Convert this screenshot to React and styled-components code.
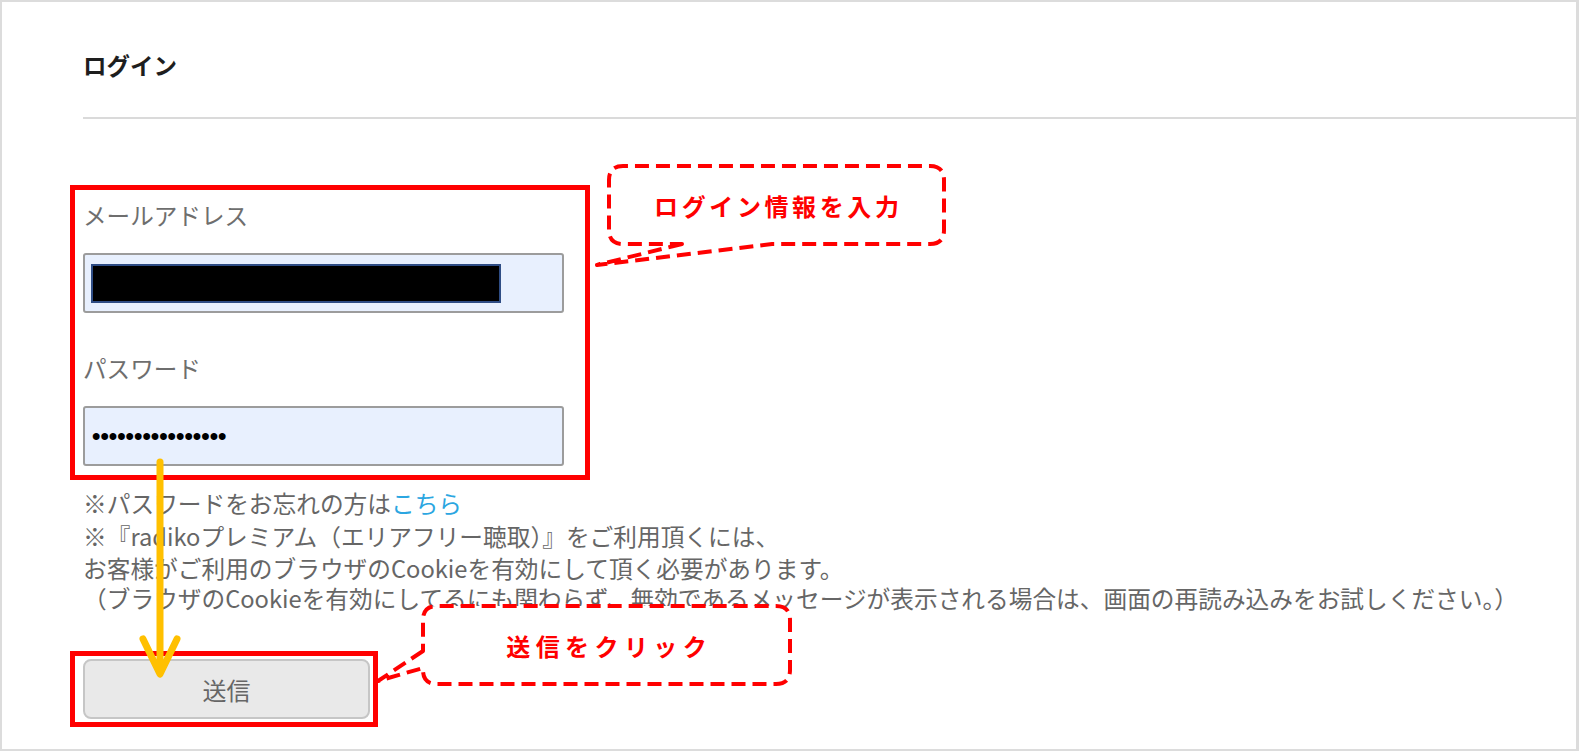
import styled, { createGlobalStyle } from 'styled-components'

const GlobalStyle = createGlobalStyle`
	html, body {
		margin: 0;
		padding: 0;
		background: #ffffff;
	}
	body {
		font-family: 'Noto Sans CJK JP', 'Noto Sans', sans-serif;
	}
`

const notes = [
	{ text: '※パスワードをお忘れの方は', link: 'こちら', gap: 0 },
	{ text: '※『radikoプレミアム（エリアフリー聴取）』をご利用頂くには、', gap: 1 },
	{ text: 'お客様がご利用のブラウザのCookieを有効にして頂く必要があります。', gap: 0 },
	{
		text: '（ブラウザのCookieを有効にしてるにも関わらず、無効であるメッセージが表示される場合は、画面の再読み込みをお試しください。）',
		gap: -2,
	},
]

const App = () => {
	return (
		<>
			<GlobalStyle />
			<Frame>
				<Header>
					<Title>ログイン</Title>
				</Header>
				<Body>
					<Highlight $width={520}>
						<FormArea>
							<Label>メールアドレス</Label>
							<Field>
								<Redacted />
							</Field>
							<Label $top={40}>パスワード</Label>
							<Field>
								<Dots>••••••••••••••••</Dots>
							</Field>
						</FormArea>
					</Highlight>

					<Notes>
						{notes.map((n, i) => (
							<NoteLine key={i} $gap={n.gap}>
								{n.text}
								{n.link && <Link href='#'>{n.link}</Link>}
							</NoteLine>
						))}
					</Notes>

					<Highlight $width={308} $button>
						<SubmitButton type='button'>送信</SubmitButton>
					</Highlight>
				</Body>

				<Annotations width='1579' height='751' viewBox='0 0 1579 751'>
					<g
						fill='#ffffff'
						stroke='#ff0000'
						strokeWidth='4'
						strokeDasharray='14 7'
						strokeLinejoin='round'
					>
						<path d='M 682 244 L 597 265 L 772 244 L 930 244 Q 944 244 944 230 L 944 180 Q 944 166 930 166 L 623 166 Q 609 166 609 180 L 609 230 Q 609 244 623 244 Z' />
						<path d='M 423 651 L 378 681 L 423 668 L 423 670 Q 423 684 437 684 L 776 684 Q 790 684 790 670 L 790 620 Q 790 606 776 606 L 437 606 Q 423 606 423 620 Z' />
					</g>
					<g
						fill='none'
						stroke='#ffc000'
						strokeWidth='7'
						strokeLinecap='round'
						strokeLinejoin='round'
					>
						<path d='M 160 462 L 160 672' />
						<path d='M 143 639 L 160 674 L 177 639' />
					</g>
				</Annotations>

				<Callout $left={609} $top={166} $width={335} $height={78} $spacing={3.6}>
					ログイン情報を入力
				</Callout>
				<Callout $left={423} $top={606} $width={367} $height={78} $spacing={5.4}>
					送信をクリック
				</Callout>
			</Frame>
		</>
	)
}

export default App

const Frame = styled.div`
	position: relative;
	box-sizing: border-box;
	width: 1579px;
	height: 751px;
	border: 2px solid #dcdcdc;
	border-right-width: 3px;
	overflow: hidden;
	background: #ffffff;
`

const Header = styled.div`
	margin-left: 81px;
	padding-top: 48px;
	padding-bottom: 37px;
	border-bottom: 2px solid #dadada;
`

const Title = styled.h1`
	margin: 0;
	font-size: 23.5px;
	line-height: 30px;
	font-weight: 700;
	color: #1e1e1e;
`

const Body = styled.div`
	margin-left: 81px;
	display: flex;
	flex-direction: column;
	align-items: flex-start;
`

const Highlight = styled.div`
	box-sizing: border-box;
	width: ${(p) => p.$width}px;
	margin-left: -13px;
	margin-top: ${(p) => (p.$button ? 37 : 66)}px;
	border: 5px solid #ff0000;
	padding: ${(p) => (p.$button ? '3px 3px 3px 8px' : '10px 20px 9px 8px')};
`

const FormArea = styled.div`
	display: flex;
	flex-direction: column;
`

const Label = styled.div`
	margin-top: ${(p) => p.$top || 0}px;
	font-size: 23.6px;
	line-height: 30px;
	color: #6e6e6e;
`

const Field = styled.div`
	box-sizing: border-box;
	width: 481px;
	height: 60px;
	margin-top: 23px;
	padding: 0 6px;
	display: flex;
	align-items: center;
	background: #e8f0fe;
	border: 2px solid #9c9c9c;
	border-radius: 3px;
`

const Redacted = styled.div`
	box-sizing: border-box;
	width: 410px;
	height: 39px;
	background: #000000;
	border: 2px solid #2f4d85;
`

const Dots = styled.span`
	font-family: 'Liberation Sans', Arial, sans-serif;
	font-size: 24px;
	font-weight: 700;
	color: #000000;
	line-height: 1;
	margin-left: 1px;
`

const Notes = styled.div`
	margin-top: 7px;
	display: flex;
	flex-direction: column;
`

const NoteLine = styled.div`
	margin-top: ${(p) => p.$gap}px;
	font-size: 23.7px;
	line-height: 32px;
	color: #666666;
	white-space: nowrap;
`

const Link = styled.a`
	color: #2ba6e1;
	text-decoration: none;
`

const SubmitButton = styled.button`
	box-sizing: border-box;
	width: 287px;
	height: 60px;
	display: block;
	background: #e9e9e9;
	border: 2px solid #c6c6c6;
	border-radius: 8px;
	font-family: 'Noto Sans CJK JP', 'Noto Sans', sans-serif;
	font-size: 24px;
	color: #666666;
	cursor: pointer;
`

const Annotations = styled.svg`
	position: absolute;
	left: -2px;
	top: -2px;
	pointer-events: none;
`

const Callout = styled.div`
	position: absolute;
	left: ${(p) => p.$left - 2}px;
	top: ${(p) => p.$top - 2}px;
	width: ${(p) => p.$width}px;
	height: ${(p) => p.$height}px;
	padding-left: ${(p) => p.$spacing}px;
	box-sizing: border-box;
	display: flex;
	align-items: center;
	justify-content: center;
	font-size: 24px;
	font-weight: 700;
	letter-spacing: ${(p) => p.$spacing}px;
	color: #ff0000;
`
